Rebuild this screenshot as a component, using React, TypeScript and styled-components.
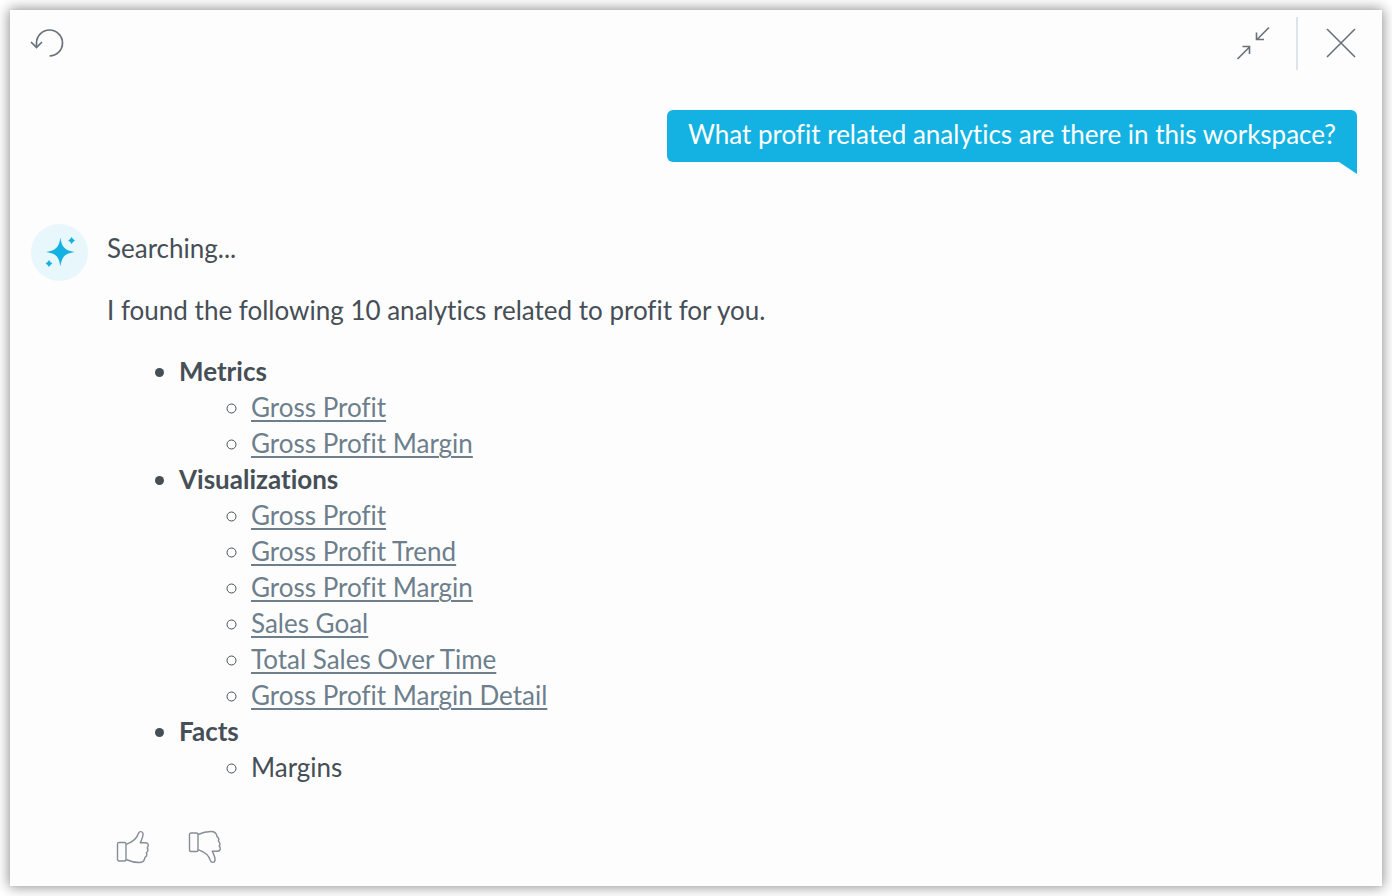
import React from "react";
import styled, { createGlobalStyle } from "styled-components";

const GlobalStyle = createGlobalStyle`
  *, *::before, *::after { box-sizing: border-box; }
  body {
    margin: 0;
    background: #fff;
    color: #464e56;
    font: 26px/36px Lato, "Open Sans", sans-serif;
    font-variant-ligatures: no-common-ligatures;
  }
`;

const Page = styled.div`
  display: flex;
  min-height: 100vh;
  padding: 10px;
`;

const Dialog = styled.section`
  flex: 1;
  display: flex;
  flex-direction: column;
  background: #fdfdfd;
  box-shadow: 0 0 12px 1px rgba(0, 0, 0, 0.45);
`;

const Header = styled.header`
  display: flex;
  align-items: flex-start;
  justify-content: space-between;
  padding: 7px 25px 0 20px;
`;

const HeaderActions = styled.div`
  display: flex;
  align-items: flex-start;
`;

const Divider = styled.span`
  width: 2px;
  height: 53px;
  margin: 0 27px 0 26px;
  background: #dde4eb;
`;

const IconButton = styled.button<{ $color?: string }>`
  display: flex;
  padding: 0;
  border: 0;
  background: none;
  color: ${(p) => p.$color ?? "#68727c"};
  cursor: pointer;
`;

const HeaderButton = styled(IconButton)`
  align-items: center;
  height: 52px;
`;

const Icon = styled.svg`
  display: block;
  fill: none;
  stroke: currentColor;
`;

const Conversation = styled.main`
  flex: 1;
  display: flex;
  flex-direction: column;
  padding: 40px 25px 22px 21px;
`;

const Question = styled.div`
  position: relative;
  align-self: flex-end;
  padding: 6px 21px 10px;
  border-radius: 6px 6px 0 6px;
  background: #14b2e2;
  color: #fff;

  &::after {
    content: "";
    position: absolute;
    top: 100%;
    right: 0;
    width: 18px;
    height: 12px;
    background: inherit;
    clip-path: polygon(0 0, 100% 0, 100% 100%);
  }
`;

const Answer = styled.article`
  display: flex;
  align-items: flex-start;
  gap: 19px;
  margin-top: 62px;
`;

const Avatar = styled.div`
  display: flex;
  flex: none;
  width: 57px;
  height: 57px;
  border-radius: 50%;
  background: #e8f7fc;
`;

const AnswerBody = styled.div`
  display: flex;
  flex-direction: column;
  padding-top: 6px;
`;

const Text = styled.p`
  margin: 0 0 26px;

  & + & {
    margin-bottom: 25px;
  }
`;

const Groups = styled.ul`
  margin: 0;
  padding-left: 72px;
  list-style: disc;
`;

const Items = styled.ul`
  margin: 0;
  padding-left: 72px;
  list-style: circle;
`;

const GroupName = styled.strong`
  font-weight: 700;
`;

const ItemLink = styled.a`
  color: #6d7f8c;
  text-decoration: underline;
  text-decoration-thickness: 2px;
  text-underline-offset: 3px;
`;

const Feedback = styled.div`
  display: flex;
  gap: 38px;
  margin-top: 45px;
  padding-left: 9px;
`;

const groups: { name: string; items: string[]; linked: boolean }[] = [
  { name: "Metrics", items: ["Gross Profit", "Gross Profit Margin"], linked: true },
  {
    name: "Visualizations",
    items: [
      "Gross Profit",
      "Gross Profit Trend",
      "Gross Profit Margin",
      "Sales Goal",
      "Total Sales Over Time",
      "Gross Profit Margin Detail",
    ],
    linked: true,
  },
  { name: "Facts", items: ["Margins"], linked: false },
];

const ResetIcon = () => (
  <Icon width="34" height="30" viewBox="0 0 34 30" strokeWidth="1.7" aria-hidden="true">
    <path d="M6.5 19V15A13 13 0 1 1 19.5 28" />
    <path d="M1 14L6.5 19.5L12 14" />
  </Icon>
);

const CollapseIcon = () => (
  <Icon width="34" height="34" viewBox="0 0 34 34" strokeWidth="1.6" aria-hidden="true">
    <path d="M33 1.5L21 13.5M20.5 6.5V13.5H28" />
    <path d="M1.5 33L13.5 21M6.500 20.500H13.500V28" />
  </Icon>
);

const CloseIcon = () => (
  <Icon width="32" height="30" viewBox="0 0 32 30" strokeWidth="1.6" aria-hidden="true">
    <path d="M2 1L30 29M30 1L2 29" />
  </Icon>
);

const SparkleIcon = () => (
  <svg width="57" height="57" viewBox="0 0 57 57" fill="#14b2e2" aria-hidden="true">
    <path d="M29.4 13.500C30.800 23.400 33.800 26.400 43.600 28C33.800 29.600 30.800 32.600 29.400 42.500C28 32.600 25 29.600 15.200 28C25 26.400 28 23.400 29.400 13.500Z" />
    <path d="M40.6 13L42 15.1L44 16.5L42 17.9L40.6 20L39.2 17.9L37.2 16.5L39.2 15.1Z" />
    <path d="M18 36L19.4 38.1L21.4 39.5L19.4 40.9L18 43L16.6 40.9L14.6 39.5L16.6 38.1Z" />
  </svg>
);

const ThumbIcon = ({ down = false }: { down?: boolean }) => (
  <Icon width="34" height="34" viewBox="0 0 34 34" strokeWidth="1.4" strokeLinejoin="round" aria-hidden="true">
    <g transform={down ? "matrix(1 0 0 -1 0 34)" : undefined}>
      <rect x="1.5" y="12.5" width="8.5" height="18.5" rx="1.5" />
      <path d="M10 14.3C15.5 12.5 21 8.5 22.5 3.2C23.2 1 26.5 1 27 3.5C27.5 6.5 26 9 24.3 12.8H29.5C32.5 12.8 33 15.5 31.2 18C32.3 19.5 32 21.5 30.3 23C31.2 24.5 30.6 26.3 29 27.3C28.7 30 26.7 32.5 23 32.5C18 32.5 14.5 31.5 10 29.5" />
    </g>
  </Icon>
);

export default function App() {
  return (
    <>
      <GlobalStyle />
      <Page>
        <Dialog aria-label="Assistant">
          <Header>
            <HeaderButton type="button" aria-label="Reset conversation">
              <ResetIcon />
            </HeaderButton>
            <HeaderActions>
              <HeaderButton type="button" aria-label="Collapse">
                <CollapseIcon />
              </HeaderButton>
              <Divider />
              <HeaderButton type="button" aria-label="Close">
                <CloseIcon />
              </HeaderButton>
            </HeaderActions>
          </Header>
          <Conversation>
            <Question>What profit related analytics are there in this workspace?</Question>
            <Answer>
              <Avatar>
                <SparkleIcon />
              </Avatar>
              <AnswerBody>
                <Text>Searching...</Text>
                <Text>I found the following 10 analytics related to profit for you.</Text>
                <Groups>
                  {groups.map((group) => (
                    <li key={group.name}>
                      <GroupName>{group.name}</GroupName>
                      <Items>
                        {group.items.map((item) => (
                          <li key={item}>
                            {group.linked ? <ItemLink href="#">{item}</ItemLink> : item}
                          </li>
                        ))}
                      </Items>
                    </li>
                  ))}
                </Groups>
                <Feedback>
                  <IconButton type="button" aria-label="Good answer" $color="#858d96">
                    <ThumbIcon />
                  </IconButton>
                  <IconButton type="button" aria-label="Bad answer" $color="#858d96">
                    <ThumbIcon down />
                  </IconButton>
                </Feedback>
              </AnswerBody>
            </Answer>
          </Conversation>
        </Dialog>
      </Page>
    </>
  );
}
